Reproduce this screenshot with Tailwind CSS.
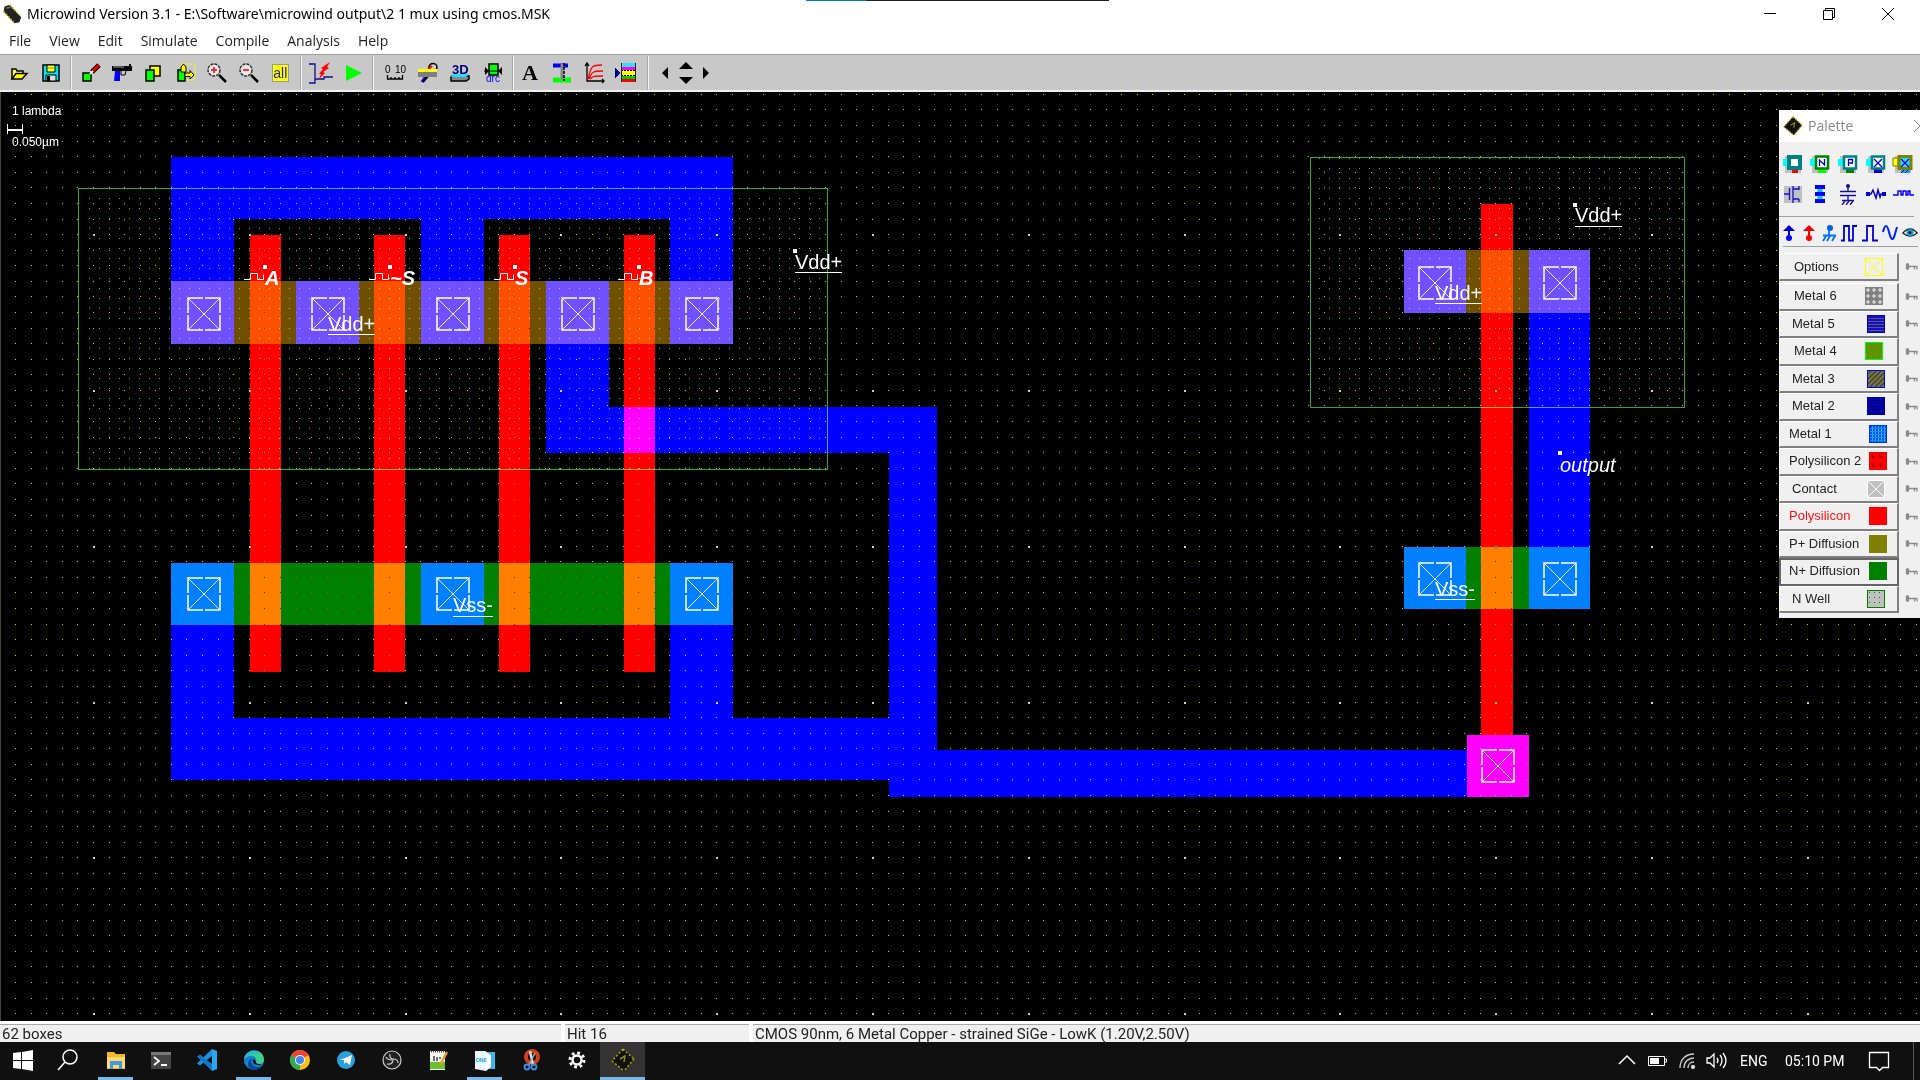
<!DOCTYPE html>
<html lang="en">
<head>
<meta charset="utf-8">
<title>Microwind Version 3.1</title>
<script src="https://cdn.jsdelivr.net/npm/@tailwindcss/browser@4"></script>
</head>
<body class="h-screen flex flex-col overflow-hidden bg-white text-black font-['Open_Sans',sans-serif]">

<svg class="absolute size-0" aria-hidden="true">
  <defs>
    <symbol id="chip" viewBox="0 0 24 24">
      <path d="M12 1 23 11 13 23 1 13Z" fill="#111"/>
      <path d="M12 1 23 11M1 13 13 23M12 1 1 13M23 11 13 23" stroke="#a8a800" stroke-width="1.500" stroke-dasharray="2 2"/>
      <path d="M9 11 14 8 13 14" fill="none" stroke="#8a8a20" stroke-width="1.500"/>
    </symbol>
    <symbol id="chip-title" viewBox="0 0 24 24">
      <path d="M3 3 9 1 23 16 21 22 15 23 2 9Z" fill="#222"/>
      <path d="M9 1 23 15M2 9 15 23" stroke="#b8b820" stroke-width="2" stroke-dasharray="2 2"/>
      <path d="M5 5 10 4" stroke="#777" stroke-width="1.500"/>
    </symbol>
    <symbol id="key" viewBox="0 0 14 8">
      <path d="M2.500 1.500h2v4h-2zM5 3.500h8v3M10.500 3.500v3M3.500 0v7" fill="none" stroke="#8a8a8a" stroke-width="1.300"/>
    </symbol>
    <symbol id="contact" viewBox="0 0 34 34">
      <path d="M1 1 33 33M33 1 1 33" stroke="#e8e8ff" stroke-width="1"/>
      <path d="M16 1H1V16M18 1H33V16M16 33H1V18M18 33H33V18" fill="none" stroke="#fff" stroke-width="1.500"/>
    </symbol>
    <pattern id="p-m6" width="6" height="6" patternUnits="userSpaceOnUse"><rect width="6" height="6" fill="#808080"/><path d="M3 1v4M1 3h4" stroke="#f0f0f0"/></pattern>
    <pattern id="p-m5" width="4" height="3" patternUnits="userSpaceOnUse"><rect width="4" height="3" fill="#5a5a6a"/><rect width="4" height="2" y="1" fill="#1010c8"/></pattern>
    <pattern id="p-m4" width="5" height="5" patternUnits="userSpaceOnUse"><rect width="5" height="5" fill="#808000"/><path d="M0 0 5 5M-1 4 1 6M4 -1 6 1" stroke="#30b000" stroke-width="1.500"/></pattern>
    <pattern id="p-m3" width="5" height="5" patternUnits="userSpaceOnUse"><rect width="5" height="5" fill="#808000"/><path d="M5 0 0 5M-1 1 1 -1M4 6 6 4" stroke="#3030a0" stroke-width="1.300"/></pattern>
    <pattern id="p-m2" width="3" height="3" patternUnits="userSpaceOnUse"><rect width="3" height="3" fill="#0000c8"/><rect width="1" height="3" fill="#000078"/><rect width="3" height="1" fill="#000078"/></pattern>
    <pattern id="p-m1" width="3" height="3" patternUnits="userSpaceOnUse"><rect width="3" height="3" fill="#0050ff"/><rect width="1" height="3" fill="#20c0ff"/><rect width="3" height="1" fill="#2090ff"/></pattern>
    <pattern id="p-nw" width="5" height="5" patternUnits="userSpaceOnUse"><rect width="5" height="5" fill="#c0c0c0"/><rect x="2" y="2" width="1" height="1" fill="#008000"/></pattern>
  </defs>
</svg>

<header class="relative shrink-0 h-7 flex items-center">
  <div class="absolute top-0 left-[42%] w-[303px] h-px flex"><span class="w-[60px] bg-[#0078d7]"></span><span class="flex-1 bg-[#222]"></span></div>
  <svg class="ml-0.5 size-5"><use href="#chip-title"/></svg>
  <h1 class="ml-[5px] text-[14px] leading-5 font-['Noto_Sans',sans-serif] whitespace-nowrap">Microwind Version 3.1 - E:\Software\microwind output\2 1 mux using cmos.MSK</h1>
  <div class="ml-auto mr-[3px] flex">
    <button aria-label="Minimize" class="w-[58px] h-7 grid place-items-center"><svg class="size-3" viewBox="0 0 12 12"><path d="M0 5.500h12" stroke="#000"/></svg></button>
    <button aria-label="Restore" class="w-[59px] h-7 grid place-items-center"><svg class="size-3" viewBox="0 0 12 12" fill="none" stroke="#000"><path d="M.5 2.500h9v9h-9zM2.500 2V.5h9v9H10"/></svg></button>
    <button aria-label="Close" class="w-[59px] h-7 grid place-items-center"><svg class="size-3" viewBox="0 0 12 12"><path d="M0 0 12 12M12 0 0 12" stroke="#000"/></svg></button>
  </div>
</header>

<nav class="shrink-0 h-[26px] pl-[9px] flex items-center gap-[18px] text-[14px] leading-5 text-[#222]">
  <button>File</button><button>View</button><button>Edit</button><button>Simulate</button><button>Compile</button><button>Analysis</button><button>Help</button>
</nav>

<div role="toolbar" aria-label="Tools" class="shrink-0 h-[38px] flex items-center bg-[#c8c8c8] border-t border-t-[#a0a0a0] border-b-2 border-b-[#f0f0f0] [&_svg]:size-6">
  <div class="ml-[3px] flex">
    <button aria-label="Open" class="w-8 grid place-items-center"><svg viewBox="0 0 24 24"><path d="M5 18V8h4l1 2h6v3" fill="#ffff50" stroke="#000" stroke-width="1.500"/><path d="M5 18 9 12.500h11L15 18z" fill="#ff0" stroke="#000" stroke-width="1.500"/></svg></button>
    <button aria-label="Save" class="w-8 grid place-items-center"><svg viewBox="0 0 24 24"><path d="M4 4h16v16H4z" fill="#00e0f0" stroke="#000" stroke-width="1.500"/><path d="M8 4h8v7H8z" fill="#ff0" stroke="#000"/><path d="M9 7h6" stroke="#888"/><path d="M7 14h10v6H7z" fill="#ddd" stroke="#000"/><path d="M8 15h3v5H8z" fill="#000"/></svg></button>
  </div>
  <div class="ml-[3px] w-0.5 h-[34px] bg-[#f4f4f4] border-l border-[#aaa]"></div>
  <div class="ml-[3px] w-[221px] flex">
    <button aria-label="Draw box" class="flex-1 grid place-items-center"><svg viewBox="0 0 24 24"><path d="M4 12h8v8H4z" fill="#0f0" stroke="#000" stroke-width="1.500"/><path d="M13 11 20 4" stroke="#000" stroke-width="5"/><path d="M14 10 20 4" stroke="#e00" stroke-width="3"/><path d="M11 13 14 10" stroke="#fff" stroke-width="2"/></svg></button>
    <button aria-label="Delete" class="flex-1 grid place-items-center"><svg viewBox="0 0 24 24"><path d="M2 5h20v5H2z" fill="#000"/><path d="M3 6h11" stroke="#aaa"/><path d="M5 10h5v10H4z" fill="#00f"/><path d="M11 10v4h4l1-4" fill="none" stroke="#000"/><path d="M20 3v3" stroke="#000" stroke-width="2"/></svg></button>
    <button aria-label="Copy" class="flex-1 grid place-items-center"><svg viewBox="0 0 24 24"><path d="M8 5h10v10H8z" fill="#ff0" stroke="#000" stroke-width="1.500"/><path d="M4 9h8v11H4z" fill="#0f0" stroke="#000" stroke-width="1.500"/></svg></button>
    <button aria-label="Move" class="flex-1 grid place-items-center"><svg viewBox="0 0 24 24"><path d="M7 3h14v16H7z" fill="none" stroke="#ff0" stroke-dasharray="2 1"/><path d="M4 9h7v11H4z" fill="#0f0" stroke="#000" stroke-width="1.500"/><path d="M7 11V6l2.500-3L12 6v5zM11 12h5V9.500l4 4.500-4 4v-2.500h-5z" fill="#ff0" stroke="#000"/></svg></button>
    <button aria-label="Zoom in" class="flex-1 grid place-items-center"><svg viewBox="0 0 24 24"><circle cx="9" cy="9" r="6" fill="#e8e8e8" stroke="#333" stroke-width="1.500" stroke-dasharray="3 1"/><path d="M6 9h6M9 6v6" stroke="#f00" stroke-width="1.500"/><path d="M14 14l7 7" stroke="#000" stroke-width="2.500"/></svg></button>
    <button aria-label="Zoom out" class="flex-1 grid place-items-center"><svg viewBox="0 0 24 24"><circle cx="9" cy="9" r="6" fill="#e8e8e8" stroke="#333" stroke-width="1.500" stroke-dasharray="3 1"/><path d="M6 9h6" stroke="#f00" stroke-width="1.500"/><path d="M14 14l7 7" stroke="#000" stroke-width="2.500"/></svg></button>
    <button class="flex-1 grid place-items-center"><span class="w-[17px] h-[18px] bg-[#ffff00] border border-[#999] text-[#22229a] text-[14px] leading-4 font-['Liberation_Sans',sans-serif]">all</span></button>
  </div>
  <div class="ml-1 w-0.5 h-[34px] bg-[#f4f4f4] border-l border-[#aaa]"></div>
  <div class="ml-[2px] w-[66px] flex">
    <button aria-label="Cross-section" class="flex-1 grid place-items-center"><svg viewBox="0 0 24 24"><path d="M0 3h6v19H0M6 18h9v-2h9" fill="none" stroke="#10108a" stroke-width="1.300"/><path d="M21 1 12 7l2 1-4 5 2 0-2 5 6-6-2-1 6-4-2-1z" fill="#f00"/></svg></button>
    <button aria-label="Run simulation" class="flex-1 grid place-items-center"><svg viewBox="0 0 24 24"><path d="M4 4 20 12 4 20z" fill="#0f0"/></svg></button>
  </div>
  <div class="ml-[2px] w-0.5 h-[34px] bg-[#f4f4f4] border-l border-[#aaa]"></div>
  <div class="ml-[5px] w-[130px] flex">
    <button aria-label="Measure" class="flex-1 grid place-items-center"><svg viewBox="0 0 24 24"><text x="2" y="12" font-family="Liberation Sans" font-size="10">0</text><text x="12" y="12" font-family="Liberation Sans" font-size="10">10</text><path d="M4.500 14v4h15v-4M8 16v2M12 16v2M16 16v2" fill="none" stroke="#000" stroke-width="1.300"/></svg></button>
    <button aria-label="2D process view" class="flex-1 grid place-items-center"><svg viewBox="0 0 24 24"><path d="M10 15 6 21" stroke="#00f" stroke-width="3"/><path d="M12 15 7 21" stroke="#000" stroke-width="2"/><ellipse cx="17" cy="6" rx="4" ry="3.500" fill="#ccc" stroke="#000" stroke-width="1.500"/><path d="M12 8 16 5" stroke="#e00" stroke-width="2"/><path d="M2 9.500h19" stroke="#ff0" stroke-width="3"/><path d="M2 13.500h19" stroke="#808080" stroke-width="5"/></svg></button>
    <button aria-label="3D view" class="flex-1 grid place-items-center"><svg viewBox="0 0 24 24"><path d="M4 15h17v3l-3 2H3v-4z" fill="#888" stroke="#000" stroke-width="1.500"/><path d="M5 13h16l-3 3H3z" fill="#20e0ff"/><text x="4" y="13" font-family="Liberation Sans" font-weight="bold" font-size="13" fill="#00007a">3D</text></svg></button>
    <button aria-label="Design rule check" class="flex-1 grid place-items-center"><svg viewBox="0 0 24 24"><path d="M8 3h9v11H8z" fill="#0f0" stroke="#000" stroke-width="1.500"/><path d="M3 10h18" stroke="#000"/><path d="M4 6l4 4-4 4zM21 6l-4 4 4 4z" fill="#000"/><text x="5" y="21" font-family="Liberation Sans" font-size="10" fill="#00f">drc</text></svg></button>
  </div>
  <div class="ml-[3px] w-0.5 h-[34px] bg-[#f4f4f4] border-l border-[#aaa]"></div>
  <div class="w-[128px] flex">
    <button class="flex-1 text-[22px] leading-6 font-bold font-['Liberation_Serif',serif]">A</button>
    <button aria-label="Via" class="flex-1 grid place-items-center"><svg viewBox="0 0 24 24"><path d="M3 4.500h15" stroke="#00f" stroke-width="4"/><path d="M3 19h18" stroke="#0f0" stroke-width="5"/><path d="M12 3v16" stroke="#888" stroke-width="3"/><path d="M14 2v18" stroke="#000" stroke-width="1.500" stroke-dasharray="3 1"/></svg></button>
    <button aria-label="MOS characteristics" class="flex-1 grid place-items-center"><svg viewBox="0 0 24 24"><path d="M5 2v18h17M3 5 5 2 7 5M20 18l2 2-2 2" fill="none" stroke="#000" stroke-width="1.300"/><path d="M6 18C9 5 10 4 20 4M7 18C10 10 12 10 21 10M8 18C11 15 13 15 21 15" fill="none" stroke="#f00" stroke-width="1.300"/></svg></button>
    <button aria-label="Show palette" class="flex-1 grid place-items-center"><svg viewBox="0 0 24 24" shape-rendering="crispEdges"><path d="M1 7 7 12 1 17z" fill="#00007a"/><path d="M7 4h15" stroke="#30e0ff" stroke-width="4"/><path d="M7 7.500h15" stroke="#f0f" stroke-width="3"/><path d="M7 12h15" stroke="#ff0" stroke-width="6"/><path d="M7 16.500h15" stroke="#0c0" stroke-width="3"/><path d="M7 19.500h15" stroke="#f00" stroke-width="3"/><path d="M7 9.500h15M7 14.500h15" stroke="#000" stroke-dasharray="2 1"/><path d="M7.500 2v19M21.500 2v19" stroke="#223"/></svg></button>
  </div>
  <div class="ml-[5px] w-0.5 h-[34px] bg-[#f4f4f4] border-l border-[#aaa]"></div>
  <div class="ml-3 flex items-center">
    <button aria-label="Scroll left" class="w-[13px] h-6 overflow-hidden"><svg viewBox="0 0 24 24"><path d="M7 6v12L1 12z"/></svg></button>
    <span class="flex flex-col">
      <button aria-label="Scroll up" class="h-3 overflow-hidden"><svg viewBox="0 0 24 24"><path d="M5 8h14L12 1z"/></svg></button>
      <button aria-label="Scroll down" class="h-3 flex items-end overflow-hidden"><svg viewBox="0 0 24 24"><path d="M5 16h14l-7 7z"/></svg></button>
    </span>
    <button aria-label="Scroll right" class="w-[15px] h-6 overflow-hidden"><svg viewBox="0 0 24 24"><path d="M5 6v12l6-6z"/></svg></button>
  </div>
</div>

<main class="relative flex-1 min-h-0 bg-black border-l border-[#444] overflow-hidden">
  <svg class="block w-full h-full" role="img" aria-label="Layout of a 2 to 1 multiplexer" font-family="Liberation Sans" fill="#fff">
    <g transform="translate(-1 -92)">
      <g shape-rendering="crispEdges">
        <path fill="#00f" d="M171 157H733V281H670V219H484V281H421V219H234V281H171z"/>
        <path fill="#00f" d="M546 344H609V407H937V750H1467V797H889V780H171V625H234V718H670V625H733V718H889V453H546z"/>
        <path fill="#00f" d="M1529 313H1590V547H1529z"/>
        <path fill="#f00" d="M250 235h31v437h-31zM374 235h31v437h-31zM499 235h31v437h-31zM624 235h31v437h-31zM1481 204h32v531h-32z"/>
        <path fill="#705000" d="M171 281H733V344H171zM1404 250H1590V313H1404z"/>
        <path fill="#ff5000" d="M250 281h31v63h-31zM374 281h31v63h-31zM499 281h31v63h-31zM624 281h31v63h-31zM1481 250h32v63h-32z"/>
        <path fill="#7050ff" d="M171 281h63v63h-63zM296 281h63v63h-63zM421 281h63v63h-63zM546 281h63v63h-63zM670 281h63v63h-63zM1404 250h62v63h-62zM1529 250h61v63h-61z"/>
        <path fill="#008000" d="M171 563H733V625H171zM1404 547H1590V609H1404z"/>
        <path fill="#ff8000" d="M250 563h31v62h-31zM374 563h31v62h-31zM499 563h31v62h-31zM624 563h31v62h-31zM1481 547h32v62h-32z"/>
        <path fill="#0080ff" d="M171 563h63v62h-63zM421 563h63v62h-63zM670 563h63v62h-63zM1404 547h62v62h-62zM1529 547h61v62h-61z"/>
        <path fill="#f0f" d="M624 407h31v46h-31zM1467 735h62v62h-62z"/>
        <path id="well-dots" class="mix-blend-screen" fill="#38c838"/>
        <path class="mix-blend-screen" fill="none" stroke="#34a834" d="M78.500 188.500H827.500V469.500H78.500zM1310.500 157.500H1684.500V407.500H1310.500z"/>
        <path id="grid-dots" class="mix-blend-difference" fill="#d0d000"/>
        <path id="major-dots" class="mix-blend-difference" fill="#d8d890"/>
      </g>
      <g id="contacts"></g>
      <g fill="none" stroke="#fff">
        <path d="M244 279.500h6.500v-6h7v6h6v-5M369 279.500h6.500v-6h7v6h6v-5M494 279.500h6.500v-6h7v6h6v-5M618 279.500h6.500v-6h7v6h6v-5"/>
        <path d="M328 334.500h47M795 272.500h47M1575 226.500h47M1435 303.500h47M453 616.500h40M1435 599.500h40"/>
        <path stroke-width="2" d="M8 130h14"/><path d="M7.500 124v10M22.500 124v10"/>
      </g>
      <path d="M263 265h4v4h-4zM388 265h4v4h-4zM513 265h4v4h-4zM637 265h4v4h-4zM793 249h4v4h-4zM1573 203h4v4h-4zM1558 451h4v4h-4z"/>
      <g font-size="20">
        <text x="328" y="331">Vdd+</text><text x="795" y="269">Vdd+</text><text x="1575" y="222">Vdd+</text><text x="1435" y="300">Vdd+</text>
        <text x="453" y="612">Vss-</text><text x="1435" y="596">Vss-</text>
        <text x="1560" y="472" font-style="italic">output</text>
        <g font-weight="bold" font-style="italic"><text x="265" y="285">A</text><text x="390" y="285">~S</text><text x="515" y="285">S</text><text x="639" y="285">B</text></g>
      </g>
      <g font-size="12"><text x="12" y="115">1 lambda</text><text x="12" y="146">0.050µm</text></g>
    </g>
  </svg>

  <aside aria-label="Palette" class="absolute right-0 top-[18px] w-[141px] h-[508px] bg-[#f0f0f0] overflow-hidden flex flex-col">
    <div class="shrink-0 h-8 bg-white flex items-center"><svg class="ml-1 size-5"><use href="#chip"/></svg><h2 class="ml-[5px] text-[14px] leading-5 text-[#888]">Palette</h2><button aria-label="Close palette" class="ml-auto w-1.5 h-3 overflow-hidden"><svg class="size-3" viewBox="0 0 12 12"><path d="M0 0 12 12M12 0 0 12" stroke="#888"/></svg></button></div>
    <div class="shrink-0 pt-[7px] pr-[3px] grid grid-cols-5 [&_button]:grid [&_button]:place-items-center [&_button]:h-[30px] [&_svg]:w-[22px] [&_svg]:h-[22px]">
      <button aria-label="Metal to poly contact"><svg viewBox="0 0 22 22"><path d="M3 3h16v17H3z" fill="#c0c0c0"/><path d="M1 6h5v7H1z" fill="#0ff"/><path d="M10 15h6v5h-6z" fill="#f00"/><path d="M7 4h11v11H7z" fill="#fff" stroke="#008080" stroke-width="4"/></svg></button>
      <button aria-label="N diffusion contact"><svg viewBox="0 0 22 22"><path d="M3 3h16v17H3z" fill="#c0c0c0"/><path d="M1 6h5v7H1z" fill="#0ff"/><path d="M9 15h8v5H9z" fill="#0f0"/><path d="M7 3.500h12v12H7z" fill="#fff" stroke="#008000" stroke-width="2.500"/><path d="M10.500 13V7l5 5V6" fill="none" stroke="#00c" stroke-width="1.300"/></svg></button>
      <button aria-label="P diffusion contact"><svg viewBox="0 0 22 22"><path d="M3 3h16v17H3z" fill="#c0c0c0"/><path d="M1 6h5v7H1z" fill="#0ff"/><path d="M9 15h8v5H9z" fill="#008000"/><path d="M7 3.500h12v12H7z" fill="#fff" stroke="#008080" stroke-width="2.500"/><path d="M11.500 13V6.500h4v3.500h-4" fill="none" stroke="#00c" stroke-width="1.300"/></svg></button>
      <button aria-label="Metal via"><svg viewBox="0 0 22 22"><path d="M3 3h16v17H3z" fill="#c0c0c0"/><path d="M1 6h5v7H1z" fill="#0ff"/><path d="M9 15h8v5H9z" fill="#00c"/><path d="M7 3.500h12v12H7z" fill="#fff" stroke="#008080" stroke-width="2.500"/><path d="M9 6l8 8M17 6l-8 8" stroke="#00c" stroke-width="1.300"/></svg></button>
      <button aria-label="Stacked contact"><svg viewBox="0 0 22 22"><path d="M3 3h16v17H3z" fill="#c0c0c0"/><path d="M1 5h5v8H1z" fill="#ff0" stroke="#808000"/><path d="M9 15h9v5H9z" fill="#20a0ff"/><path d="M9 20l4-4M13 20l4-4" stroke="#00c"/><path d="M7 3.500h12v12H7z" fill="#20e0ff" stroke="#808000" stroke-width="3"/><path d="M9 6l8 8M17 6l-8 8" stroke="#00c" stroke-width="1.300"/></svg></button>
      <button aria-label="MOS generator"><svg viewBox="0 0 22 22"><path d="M2 3h18v17H2z" fill="#c0c0c0"/><path d="M2 11h5M7.500 5v12M11 3v17M11 6h6M11 16h6M17 3v4M17 16v3" fill="none" stroke="#1010d0" stroke-width="1.300"/></svg></button>
      <button aria-label="Path"><svg viewBox="0 0 22 22"><path d="M11 3v17" stroke="#0cf" stroke-width="5"/><path d="M6 4h10M6 11h10M6 18h10" stroke="#00f" stroke-width="4"/></svg></button>
      <button aria-label="Capacitor"><svg viewBox="0 0 22 22"><path d="M11 2v6M3 8.500h16M3 12.500h16M11 12v5M5 17.500h12M8 18l-3 4M12 18l-3 4M16 18l-3 4" stroke="#1010a0" stroke-width="1.300"/><circle cx="11" cy="3" r="2" fill="#1010a0"/></svg></button>
      <button aria-label="Resistor"><svg viewBox="0 0 22 22"><path d="M2 11h4l2-4 3 8 2-8 2 7 1-3h5" fill="none" stroke="#00c" stroke-width="1.500"/><path d="M1 9h4v4H1zM17 9h4v4h-4z" fill="#00c"/></svg></button>
      <button aria-label="Inductor"><svg viewBox="0 0 22 22"><path d="M1 12h5V8h3v4h2V8h3v4h2V8h2v4h4" fill="none" stroke="#00f" stroke-width="1.500" stroke-linejoin="round"/></svg></button>
    </div>
    <hr class="shrink-0 mt-[7px] mr-1.5 border-[#a0a0a0]">
    <div class="shrink-0 h-[29px] pt-0.5 grid grid-cols-7 place-items-center [&_svg]:w-4 [&_svg]:h-[18px]">
      <button aria-label="Supply"><svg viewBox="2 0 16 18"><path d="M10 1 4 7h12z" fill="#00c"/><path d="M10 5v8" stroke="#00c" stroke-width="2"/><circle cx="10" cy="14" r="3" fill="#00f"/></svg></button>
      <button aria-label="High supply"><svg viewBox="2 0 16 18"><path d="M10 1 4 7h12z" fill="#e00"/><path d="M10 5v8" stroke="#e00" stroke-width="2"/><circle cx="10" cy="14" r="3" fill="#f00"/></svg></button>
      <button aria-label="Ground"><svg viewBox="0 0 16 18"><circle cx="9" cy="4" r="3" fill="#0060e0"/><path d="M8 6v5M2 11.500h13M5 12l-3 5M9 12l-3 5M14 12l-3 5" stroke="#0070ff" stroke-width="1.800"/></svg></button>
      <button aria-label="Clock"><svg viewBox="0 0 16 18"><path d="M0 16.500h3V2h5v14.500h4V2h4" fill="none" stroke="#0000d0" stroke-width="1.800"/></svg></button>
      <button aria-label="Pulse"><svg viewBox="0 0 16 18"><path d="M0 16.500h5V2h6v14.500h5" fill="none" stroke="#0000d0" stroke-width="1.800"/></svg></button>
      <button aria-label="Sine"><svg viewBox="0 0 16 18"><path d="M1 8C3 0 5 0 7 8S11 18 13 10L15 3" fill="none" stroke="#0020ff" stroke-width="2"/></svg></button>
      <button aria-label="Visible"><svg viewBox="0 0 18 18"><path d="M1 9Q9 0 17 9 9 16 1 9z" fill="#fff" stroke="#222" stroke-width="1.500"/><circle cx="9" cy="8.500" r="4" fill="#00a0d0"/><circle cx="9" cy="8.500" r="1.500"/></svg></button>
    </div>
    <hr class="shrink-0 ml-1 mr-0.5 border-[#a0a0a0]">
    <div id="layers" class="mt-1.5 h-[360px] flex flex-col"></div>
  </aside>
</main>

<footer class="shrink-0 h-[21px] flex gap-1 bg-white text-[15px] leading-[18px] text-[#222] font-['Roboto',sans-serif] [&>span]:mt-[3px] [&>span]:bg-[#f0f0f0] [&>span]:border-t [&>span]:border-[#a8a8a8] [&>span]:pl-0.5">
  <span class="w-[561px]">62 boxes</span><span class="w-[184px]">Hit 16</span><span class="flex-1">CMOS 90nm, 6 Metal Copper - strained SiGe - LowK (1.20V,2.50V)</span>
</footer>

<div role="toolbar" aria-label="Taskbar" class="shrink-0 h-[38px] bg-[#101010] text-white flex items-stretch [&_button]:grid [&_button]:place-items-center [&_button]:border-b-[3px] [&_svg]:size-6">
  <button aria-label="Start" class="w-[45px] border-transparent"><svg viewBox="0 0 24 24" fill="#fff"><path d="M2 5l8-1v8H2zM11 4l11-2v10H11zM2 13h8v8l-8-1zM11 13h11v10l-11-2z"/></svg></button>
  <button aria-label="Search" class="w-[45px] border-transparent"><svg viewBox="0 0 24 24" fill="none" stroke="#fff" stroke-width="1.500"><circle cx="14" cy="9" r="7"/><path d="M9 14 2 22"/></svg></button>
  <button aria-label="File Explorer" class="w-[35px] ml-2 mr-[5px] border-[#76b9ed]"><svg viewBox="0 0 24 24"><path d="M3 4h7l2 2h9v15H3z" fill="#f5b829"/><path d="M3 9h18v11H3z" fill="#ffd96a"/><path d="M6 13h12v8h-3v-4H9v4H6z" fill="#3c9be8"/></svg></button>
  <button aria-label="Terminal" class="w-[46px] border-transparent"><svg viewBox="0 0 24 24"><path d="M2 4h20v17H2z" fill="#444"/><path d="M2 4h20v3H2z" fill="#777"/><path d="M5 9l5 4-5 4M12 17h6" fill="none" stroke="#fff" stroke-width="1.800"/></svg></button>
  <button aria-label="Visual Studio Code" class="w-[46px] border-transparent"><svg viewBox="0 0 24 24"><path d="M17 1l5 2v18l-5 2z" fill="#2aa5f2"/><path d="M17 1v7L5 17.500 2 15.500z" fill="#1f90dd"/><path d="M17 23v-7L5 6.500 2 8.500z" fill="#1177c4"/></svg></button>
  <button aria-label="Edge" class="w-[35px] mx-[6px] border-[#76b9ed]"><svg viewBox="0 0 24 24"><circle cx="12" cy="12" r="10" fill="#1583cf"/><path d="M2 11C4 0 22 0 22 12c0 5-7 5-8 2 2-6-6-9-12-3z" fill="#3ccf8e"/><path d="M2 11C4 2 14 1 18 6c-6-2-12 0-16 5z" fill="#2bb6dc"/><path d="M10 11c-3 6 4 10 10 7-4 6-14 5-14-2 0-3 2-5 4-5z" fill="#0c4a94"/><path d="M11 11c-1 5 3 7 9 6l-2-1c-4 0-5-1-4-3z" fill="#101010"/></svg></button>
  <button aria-label="Chrome" class="w-[46px] border-transparent"><svg viewBox="0 0 24 24"><circle cx="12" cy="12" r="10" fill="#fbc116"/><path d="M12 12 3.300 7A10 10 0 0 1 20.700 7z" fill="#ea4335"/><path d="M3.300 7 12 12v10A10 10 0 0 1 3.300 7z" fill="#34a853"/><circle cx="12" cy="12" r="5" fill="#fff"/><circle cx="12" cy="12" r="4" fill="#4285f4"/></svg></button>
  <button aria-label="Telegram" class="w-[46px] border-transparent"><svg viewBox="0 0 24 24"><circle cx="12" cy="12" r="9" fill="#2aa1de"/><path d="M6 12 18 7l-2 10-4-3-2 2v-4z" fill="#fff"/></svg></button>
  <button aria-label="OBS Studio" class="w-[46px] border-transparent"><svg viewBox="0 0 24 24" fill="none" stroke="#ccc" stroke-width="1.200"><circle cx="12" cy="12" r="9" fill="#222"/><path d="M10 6c-1 3 1 5 3 5 3 0 5 1 5 4M13 11c0 3-1 6-6 5M12 12c-3 0-5-1-6-3"/></svg></button>
  <button aria-label="Notepad++" class="w-[46px] border-transparent"><svg viewBox="0 0 24 24"><path d="M4 3h15v19H4z" fill="#f4f4f4"/><path d="M4 14h15v7H4z" fill="#69c030"/><path d="M5 3.500h13" stroke="#444" stroke-width="2" stroke-dasharray="1 1"/><path d="M8 8v5M11 9v4M14 9v2" stroke="#444" stroke-width="1.500"/><path d="M21 4 14 17" stroke="#e0a020" stroke-width="2.500"/></svg></button>
  <button aria-label="OneNote" class="w-[35px] mx-[6px] border-[#76b9ed]"><svg viewBox="0 0 24 24"><path d="M12 4h10v17H12z" fill="#38b8f0"/><path d="M2 3h11v20L2 21z" fill="#e8f7fe"/><path d="M13 4l5 3v12l-5 4z" fill="#fff"/><text x="3" y="14" font-family="Liberation Sans" font-size="5" font-weight="bold" fill="#1a9ee0">ONE</text></svg></button>
  <button aria-label="Snipping Tool" class="w-[46px] border-transparent"><svg viewBox="0 0 24 24" fill="none"><circle cx="13" cy="9" r="6" stroke="#d0401c" stroke-width="4"/><path d="M11 3l3 14" stroke="#ddd" stroke-width="2.500"/><path d="M16 5 10 17" stroke="#aaa" stroke-width="1.500"/><circle cx="8" cy="19" r="2.500" stroke="#3a8fe0" stroke-width="1.800"/><circle cx="15" cy="19" r="2.500" stroke="#3a8fe0" stroke-width="1.800"/></svg></button>
  <button aria-label="Settings" class="w-[46px] border-transparent"><svg viewBox="0 0 24 24" fill="none" stroke="#fff"><circle cx="12" cy="12" r="4.500" stroke-width="2.500"/><circle cx="12" cy="12" r="7" stroke-width="3" stroke-dasharray="2.750 2.750"/></svg></button>
  <button aria-label="Microwind" class="w-[45px] bg-[#333] border-[#76b9ed]"><svg><use href="#chip"/></svg></button>
  <div class="ml-auto flex items-center text-[14px] leading-5">
    <button aria-label="Hidden icons" class="w-[30px] border-transparent h-full"><svg viewBox="0 0 24 24" fill="none" stroke="#fff" stroke-width="1.500"><path d="M4 16l8-8 8 8"/></svg></button>
    <button aria-label="Battery" class="w-[30px] border-transparent h-full"><svg viewBox="0 0 24 24" fill="none" stroke="#fff"><path d="M3.500 8.500h16v9h-16zM20 11h1.500v3H20"/><path d="M5 10h9v6H5z" fill="#fff" stroke="none"/></svg></button>
    <button aria-label="Network" class="w-[30px] border-transparent h-full"><svg viewBox="0 0 24 24" fill="none" stroke="#ccc" stroke-width="1.300"><path d="M5 20C5 12 10 6 19 6M9 20c0-6 4-10 10-10M13 20c0-3 2-6 6-6"/><circle cx="18" cy="19" r="1.500" fill="#fff"/></svg></button>
    <button aria-label="Volume" class="w-[30px] border-transparent h-full"><svg viewBox="0 0 24 24" fill="none" stroke="#fff" stroke-width="1.300"><path d="M2 10h3l4-4v13l-4-4H2zM12 10q2 2.500 0 5M15 7q4 5 0 11M18 5q6 8 0 15"/></svg></button>
    <span class="w-[28px] ml-2 font-['Roboto',sans-serif]">ENG</span>
    <time class="ml-[17px] w-[60px] whitespace-nowrap font-['Roboto',sans-serif]">05:10 PM</time>
    <button aria-label="Notifications" class="ml-[22px] w-6 border-transparent h-full"><svg viewBox="0 0 24 24" fill="none" stroke="#fff" stroke-width="1.300"><path d="M2.500 4.500h19v15h-6l-3 3-3-3h-7z"/></svg></button>
    <span class="ml-[22px] mr-1.5 w-px h-full bg-[#555]"></span>
  </div>
</div>

<script>
  // Lambda grid: one dot per lambda square, a brighter one every ten.
  const STEP = 15.58, cols = 250, rows = 140;
  const px = i => Math.floor(STEP * i), py = j => Math.floor(STEP * j + 0.9);
  let minor = '', major = '';
  for (let j = 6; j < rows; j++) for (let i = 1; i < cols; i++) {
    if (i % 10 === 6 && j % 10 === 5) major += `M${px(i)} ${py(j)}h2v2h-2z`;
    else minor += `M${px(i)} ${py(j)}h1v1h-1z`;
  }
  document.getElementById('grid-dots').setAttribute('d', minor);
  document.getElementById('major-dots').setAttribute('d', major);

  // Dotted fill of the N wells.
  let well = '';
  for (const [x0, y0, x1, y1] of [[89, 198, 826, 469], [1319, 158, 1684, 407]])
    for (let y = y0; y < y1; y += 10) for (let x = x0; x < x1; x += 10) well += `M${x} ${y}h1v1h-1z`;
  document.getElementById('well-dots').setAttribute('d', well);

  document.getElementById('contacts').innerHTML = [
    [204, 314], [328, 314], [453, 314], [578, 314], [702, 314], [1435, 283], [1560, 283],
    [204, 594], [453, 594], [702, 594], [1435, 579], [1560, 579], [1498, 766]
  ].map(([x, y]) => `<use href="#contact" x="${x - 17}" y="${y - 17}" width="34" height="34"/>`).join('');

  const box = (fill, stroke, extra = '') => `<svg class="size-[18px]" viewBox="0 0 18 18"><rect x=".5" y=".5" width="17" height="17" fill="${fill}" stroke="${stroke}"/>${extra}</svg>`;
  const A = 'pl-[14px] pr-[14px]', B = 'pl-3 pr-3', C = 'pl-[9px] pr-[10px]';
  const layers = [
    ['Options', A, box('#f0f0f0', '#ff0', '<path d="M1 1 17 17M17 1 1 17" stroke="#ff0"/>')],
    ['Metal 6', A, box('url(#p-m6)', '#808080')],
    ['Metal 5', B, box('url(#p-m5)', '#00d')],
    ['Metal 4', A, box('url(#p-m4)', '#0f0')],
    ['Metal 3', B, box('url(#p-m3)', '#00f')],
    ['Metal 2', B, box('url(#p-m2)', '#0000a0')],
    ['Metal 1', C, box('url(#p-m1)', '#0030ff')],
    ['Polysilicon 2', C, box('#f00', '#f00', '<path d="M3 2v3h3M11 2v3h3M3 11v3h3M11 11v3h3" fill="none" stroke="#600"/>')],
    ['Contact', B, box('#c0c0c0', '#fff', '<path d="M1 1 17 17M17 1 1 17" stroke="#fff"/>')],
    ['Polysilicon', C, box('#f00', '#f00')],
    ['P+ Diffusion', C, box('#808000', '#808000')],
    ['N+ Diffusion', C, box('#008000', '#008000')],
    ['N Well', B, box('url(#p-nw)', '#008000')]
  ];
  document.getElementById('layers').innerHTML = layers.map(([name, pad, icon], i) => `
    <div class="flex ${i ? 'flex-1' : 'h-[30px] pb-0.5'} min-h-0 items-stretch">
      <button class="w-[120px] flex items-center justify-between ${pad} border-t border-l border-t-white border-l-white border-b-2 border-r-2 ${name === 'N+ Diffusion' ? 'outline-2 -outline-offset-2 outline-[#666]' : ''} border-b-[#808080] border-r-[#808080] text-[13px] leading-4 font-['Liberation_Sans',sans-serif] whitespace-nowrap ${name === 'Polysilicon' ? 'text-[#ff1010]' : 'text-[#222]'}">${name}${icon}</button>
      <button aria-label="Lock ${name}" class="ml-[5px] w-3.5 shrink-0 flex items-center"><svg class="w-3.5 h-2"><use href="#key"/></svg></button>
    </div>`).join('');
</script>
</body>
</html>
